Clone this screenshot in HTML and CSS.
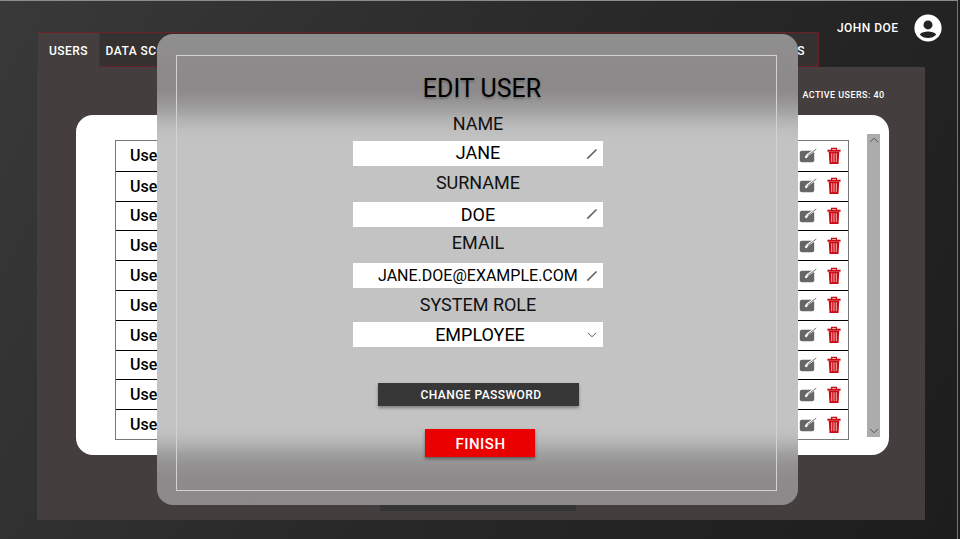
FILE: index.html
```
<!DOCTYPE html>
<html lang="en">
<head>
<meta charset="utf-8">
<title>Edit user</title>
<link rel="stylesheet" href="styles.css">
</head>
<body>
<svg class="defs" width="0" height="0" aria-hidden="true">
  <symbol id="edit" viewBox="0 0 18 16">
    <rect x=".8" y="2.800" width="14.400" height="11.400" rx="2" fill="#666"/>
    <path d="M17 1.200 8.800 6.800 6.500 9.700" fill="none" stroke="#fff" stroke-width="2.300"/>
    <path d="M17.300 1 8.600 7.600" fill="none" stroke="#777" stroke-width="1"/>
  </symbol>
  <symbol id="trash" viewBox="0 0 14 18">
    <path d="M4.6 3.4V1.3h4.8v2.1" fill="none" stroke="#c60d14" stroke-width="1.3"/>
    <path d="M.4 2.700h13.2v2H.4z" fill="#c60d14"/>
    <path d="M1.7 4.700h10.6l-.8 12.2H2.5z" fill="#cc0a11"/>
    <path d="M4.7 6.2v9M7 6.2v9M9.3 6.2v9" stroke="#fff" stroke-width=".7"/>
  </symbol>
  <symbol id="pencil" viewBox="0 0 12 12">
    <path d="M1.300 10.700 10.500 1.500" stroke="#666" stroke-width="1.700"/>
  </symbol>
  <symbol id="chevron" viewBox="0 0 10 6">
    <path d="M1 .8 5 4.8 9 .8" fill="none" stroke="#555" stroke-width="1"/>
  </symbol>
</svg>
<div class="app">
  <header class="topbar">
    <nav class="tabs">
      <span class="tab active">USERS</span>
      <span class="tab wide">DATA SCOPES</span>
      <span class="tab last">LOGS</span>
    </nav>
    <div class="account">
      <span>JOHN DOE</span>
      <svg width="28" height="28" viewBox="0 0 28 28"><circle cx="14" cy="14" r="13.6" fill="#fff"/><circle cx="14" cy="10.9" r="4.5" fill="#232323"/><path d="M5.7 20.6C7.5 18 10.7 17.4 14 17.4s6.500.6 8.300 3.200C20.300 23.100 17.300 24.100 14 24.100S7.700 23.100 5.700 20.600z" fill="#232323"/></svg>
    </div>
  </header>
  <main class="panel">
    <p class="count">ACTIVE USERS: 40</p>
    <section class="card">
      <div class="table">
        <div class="row"><span>User 1</span><svg class="edit"><use href="#edit"/></svg><svg class="trash"><use href="#trash"/></svg></div>
        <div class="row"><span>User 2</span><svg class="edit"><use href="#edit"/></svg><svg class="trash"><use href="#trash"/></svg></div>
        <div class="row"><span>User 3</span><svg class="edit"><use href="#edit"/></svg><svg class="trash"><use href="#trash"/></svg></div>
        <div class="row"><span>User 4</span><svg class="edit"><use href="#edit"/></svg><svg class="trash"><use href="#trash"/></svg></div>
        <div class="row"><span>User 5</span><svg class="edit"><use href="#edit"/></svg><svg class="trash"><use href="#trash"/></svg></div>
        <div class="row"><span>User 6</span><svg class="edit"><use href="#edit"/></svg><svg class="trash"><use href="#trash"/></svg></div>
        <div class="row"><span>User 7</span><svg class="edit"><use href="#edit"/></svg><svg class="trash"><use href="#trash"/></svg></div>
        <div class="row"><span>User 8</span><svg class="edit"><use href="#edit"/></svg><svg class="trash"><use href="#trash"/></svg></div>
        <div class="row"><span>User 9</span><svg class="edit"><use href="#edit"/></svg><svg class="trash"><use href="#trash"/></svg></div>
        <div class="row"><span>User 10</span><svg class="edit"><use href="#edit"/></svg><svg class="trash"><use href="#trash"/></svg></div>
      </div>
      <div class="scrollbar">
        <svg class="chev up"><use href="#chevron"/></svg>
        <svg class="chev"><use href="#chevron"/></svg>
      </div>
    </section>
    <div class="add"></div>
  </main>
</div>
<div class="modal">
  <form class="frame">
    <h1>EDIT USER</h1>
    <label class="l-name">NAME</label>
    <div class="field"><span class="v">JANE</span><svg class="pencil"><use href="#pencil"/></svg></div>
    <label class="l-surname">SURNAME</label>
    <div class="field low"><span class="v">DOE</span><svg class="pencil"><use href="#pencil"/></svg></div>
    <label class="l-email">EMAIL</label>
    <div class="field"><span class="v email">JANE.DOE@EXAMPLE.COM</span><svg class="pencil"><use href="#pencil"/></svg></div>
    <label class="l-role">SYSTEM ROLE</label>
    <div class="field role"><span class="v">EMPLOYEE</span><svg class="chev"><use href="#chevron"/></svg></div>
    <button type="button" class="change">CHANGE PASSWORD</button>
    <button type="button" class="finish">FINISH</button>
  </form>
</div>
</body>
</html>
```
FILE: styles.css
```
* { box-sizing: border-box; }
body {
  margin: 0;
  height: 539px;
  overflow: hidden;
  position: relative;
  background: #1e1e1e;
  font-family: Roboto, "Liberation Sans", sans-serif;
}
.defs { position: absolute; }
.app {
  width: 958px;
  height: 539px;
  border-top: 1px solid #8b8d8c;
  border-right: 1px solid #777;
  background: linear-gradient(120deg, #393939 0%, #2a2929 50%, #1d1d1d 100%);
}
.topbar {
  height: 66px;
  padding-left: 37px;
  display: flex;
  align-items: flex-end;
}
.tabs { display: flex; width: 782px; height: 35px; }
.tab {
  display: flex;
  flex: none;
  align-items: center;
  height: 35px;
  padding-top: 2px;
  background: #343130;
  border: 1px solid #6b2227;
  border-left: 0;
  color: #fff;
  font-size: 12px;
  font-weight: 500;
  letter-spacing: .48px;
}
.tab.active {
  width: 63px;
  padding-left: 11px;
  border-left: 1px solid #6b2227;
  border-bottom: 0;
  background: #443f3e;
}
.tab.wide { width: 619px; padding-left: 5.500px; border-right: 0; }
.tab.last { flex: 1; justify-content: flex-end; padding-right: 13px; }
.account {
  align-self: stretch;
  display: flex;
  align-items: flex-start;
  margin-left: 18px;
  padding-top: 12px;
  color: #fff;
  font-size: 12px;
  font-weight: 500;
  letter-spacing: .45px;
  line-height: 30px;
}
.account span { width: 77.400px; }
.account svg { margin-top: 1px; }
.panel {
  width: 887.500px;
  height: 453px;
  margin-left: 37px;
  padding: 1px 36px 0 38.500px;
  background: #443f3e;
}
.count {
  height: 47px;
  margin: 0 4px 0 0;
  padding-top: 21px;
  text-align: right;
  color: #fff;
  font-size: 9px;
  font-weight: 500;
  letter-spacing: .43px;
  line-height: 13px;
}
.card {
  width: 813px;
  height: 340px;
  padding: 19px 9px 0 39.500px;
  display: flex;
  justify-content: space-between;
  border-radius: 17px;
  background: #fff;
}
.table {
  width: 734px;
  height: 300px;
  margin-top: 6px;
  display: grid;
  grid-template-rows: repeat(10, 1fr);
  border: 1px solid #777;
}
.row {
  display: flex;
  align-items: center;
  padding: 0 7px 0 14px;
  color: #000;
  font-size: 16px;
  font-weight: 500;
}
.row + .row { border-top: 1px solid #000; }
.row span { flex: 1; }
.edit { width: 18px; height: 16px; margin-right: 10px; }
.trash { width: 14px; height: 18px; }
.scrollbar {
  width: 13px;
  height: 303px;
  padding: 3px 2px;
  display: flex;
  flex-direction: column;
  justify-content: space-between;
  background: #acacac;
}
.chev { width: 10px; height: 6px; }
.up { transform: rotate(180deg); }
.add { width: 196px; height: 31px; margin: 25px 0 0 304.500px; background: #363535; }
/* dialog over the page */
.modal {
  position: absolute;
  left: 157px;
  top: 34px;
  width: 641px;
  height: 471.400px;
  padding: 21px 21px 14px 19px;
  border-radius: 16px;
  background: linear-gradient(#908f8f 0, #8e8c8c 20px, #8b8989 45px, #8c8a8a 57px, #969494 67px, #a3a2a2 77px, #b2b2b2 86px, #bebebe 96px, #c3c3c3 106px, #c3c3c3 392px, #bebebe 401px, #b0b0b0 411px, #a09f9f 420px, #949292 430px, #8d8b8b 443px, #8c898a 471px);
}
.frame {
  height: 436px;
  padding-left: 3px;
  display: flex;
  flex-direction: column;
  align-items: center;
  border: 1px solid #d2d2d2;
  color: #000;
}
h1 {
  height: 55px;
  margin: 0;
  padding-left: 8px;
  font-size: 25px;
  font-weight: 400;
  line-height: 65px;
  text-shadow: 0 2px 2px rgba(0, 0, 0, .25);
}
label { font-size: 18px; color: #111; flex: none; }
.l-name { height: 30px; line-height: 25px; }
.l-surname { height: 35.500px; line-height: 33px; }
.l-email { height: 36.500px; line-height: 32px; }
.l-role { height: 34px; line-height: 33px; }
.field {
  flex: none;
  width: 250px;
  height: 25px;
  padding-right: 5px;
  display: flex;
  align-items: center;
  background: #fff;
  font-size: 18px;
}
.v { flex: 1; padding: 0 0 2px 17px; text-align: center; }
.low .v { padding-top: 2px; padding-bottom: 1px; }
.v.email { padding: 0 0 0 25px; margin-right: -1px; font-size: 16px; white-space: nowrap; text-align: left; }
.pencil { width: 12px; height: 12px; }
.role .v { padding: 0 0 1px 20px; }
.role .chev { margin-right: 1px; }
button {
  flex: none;
  border: 0;
  padding: 0;
  color: #fff;
  font-family: inherit;
  font-weight: 500;
  letter-spacing: .5px;
}
.change {
  width: 201px;
  height: 23px;
  margin-top: 36px;
  padding-left: 6px;
  background: #373737;
  font-size: 12px;
  letter-spacing: .45px;
  box-shadow: 0 2px 3px rgba(0, 0, 0, .35);
}
.finish {
  width: 110px;
  height: 28px;
  margin: 23px 0 0 4px;
  padding: 2px 0 0 1px;
  background: #ea0000;
  font-size: 15px;
  box-shadow: 0 2px 3px rgba(0, 0, 0, .4);
}
```
